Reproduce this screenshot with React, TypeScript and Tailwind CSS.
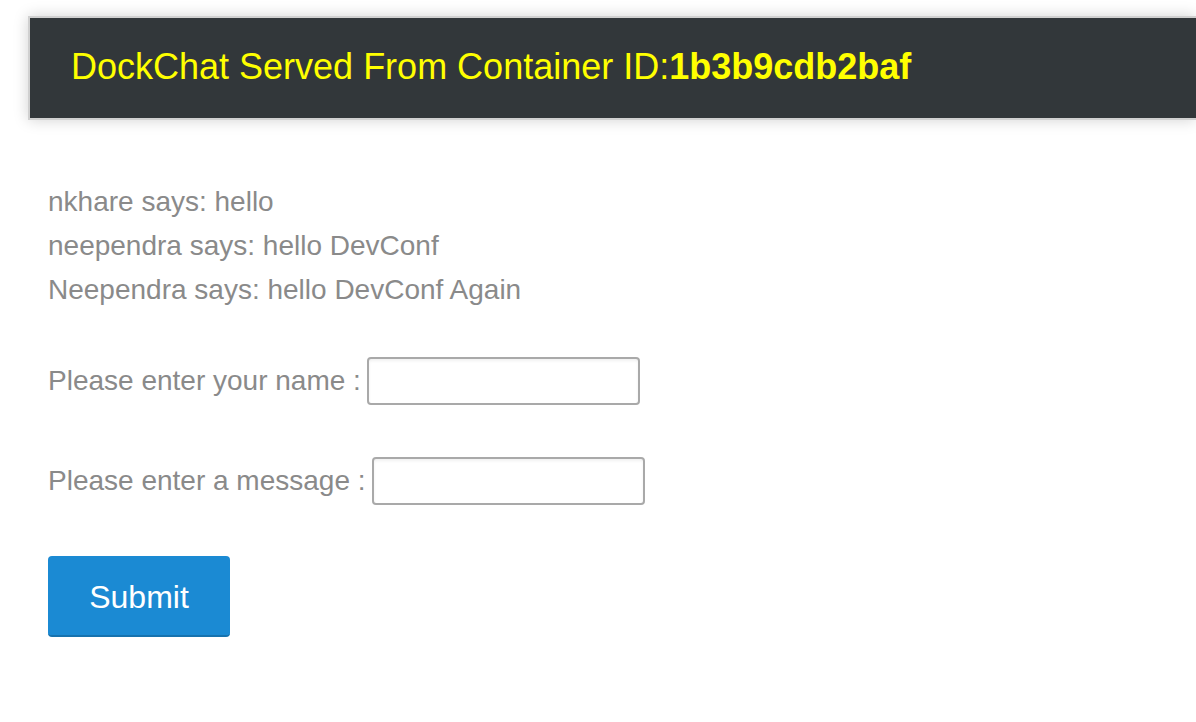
const messages = [
  'nkhare says: hello',
  'neependra says: hello DevConf',
  'Neependra says: hello DevConf Again',
];

function Header({ id }: { id: string }) {
  return (
    <div className="ml-[28px] mt-[16px] h-[104px] border-y-2 border-l-2 border-[#d0d0d0] bg-[#32373a] shadow-[0_0_14px_rgba(0,0,0,0.18)] flex items-center pl-[41px]">
      <h1 className="text-[36px] leading-none text-[#ffff00] pb-[2px]">
        DockChat Served From Container ID:<b className="font-bold">{id}</b>
      </h1>
    </div>
  );
}

function Field({ label, className }: { label: string; className: string }) {
  return (
    <div className={'flex items-center h-[48px] ' + className}>
      <span className="text-[28px] text-[#8a8a8a] mr-[6px]">{label}</span>
      <input
        type="text"
        className="w-[273px] h-[48px] border-2 border-[#a9a9a9] rounded-[4px] bg-white shadow-[inset_0_2px_3px_rgba(0,0,0,0.06)] outline-none"
      />
    </div>
  );
}

export default function App() {
  return (
    <div className="min-h-screen bg-white font-['Liberation_Sans',Arial,sans-serif]">
      <Header id="1b3b9cdb2baf" />
      <div className="pl-[48px] pt-[60px]">
        <div className="text-[28px] leading-[44px] text-[#8a8a8a]">
          {messages.map((m) => (
            <div key={m}>{m}</div>
          ))}
        </div>
        <form onSubmit={(e) => e.preventDefault()}>
          <Field label="Please enter your name :" className="mt-[45px]" />
          <Field label="Please enter a message :" className="mt-[52px]" />
          <button
            type="submit"
            className="mt-[51px] w-[182px] h-[81px] rounded-[4px] bg-[#1b8ad3] border-b-2 border-[#1672ae] text-white text-[32px] pt-[2px]"
          >
            Submit
          </button>
        </form>
      </div>
    </div>
  );
}
